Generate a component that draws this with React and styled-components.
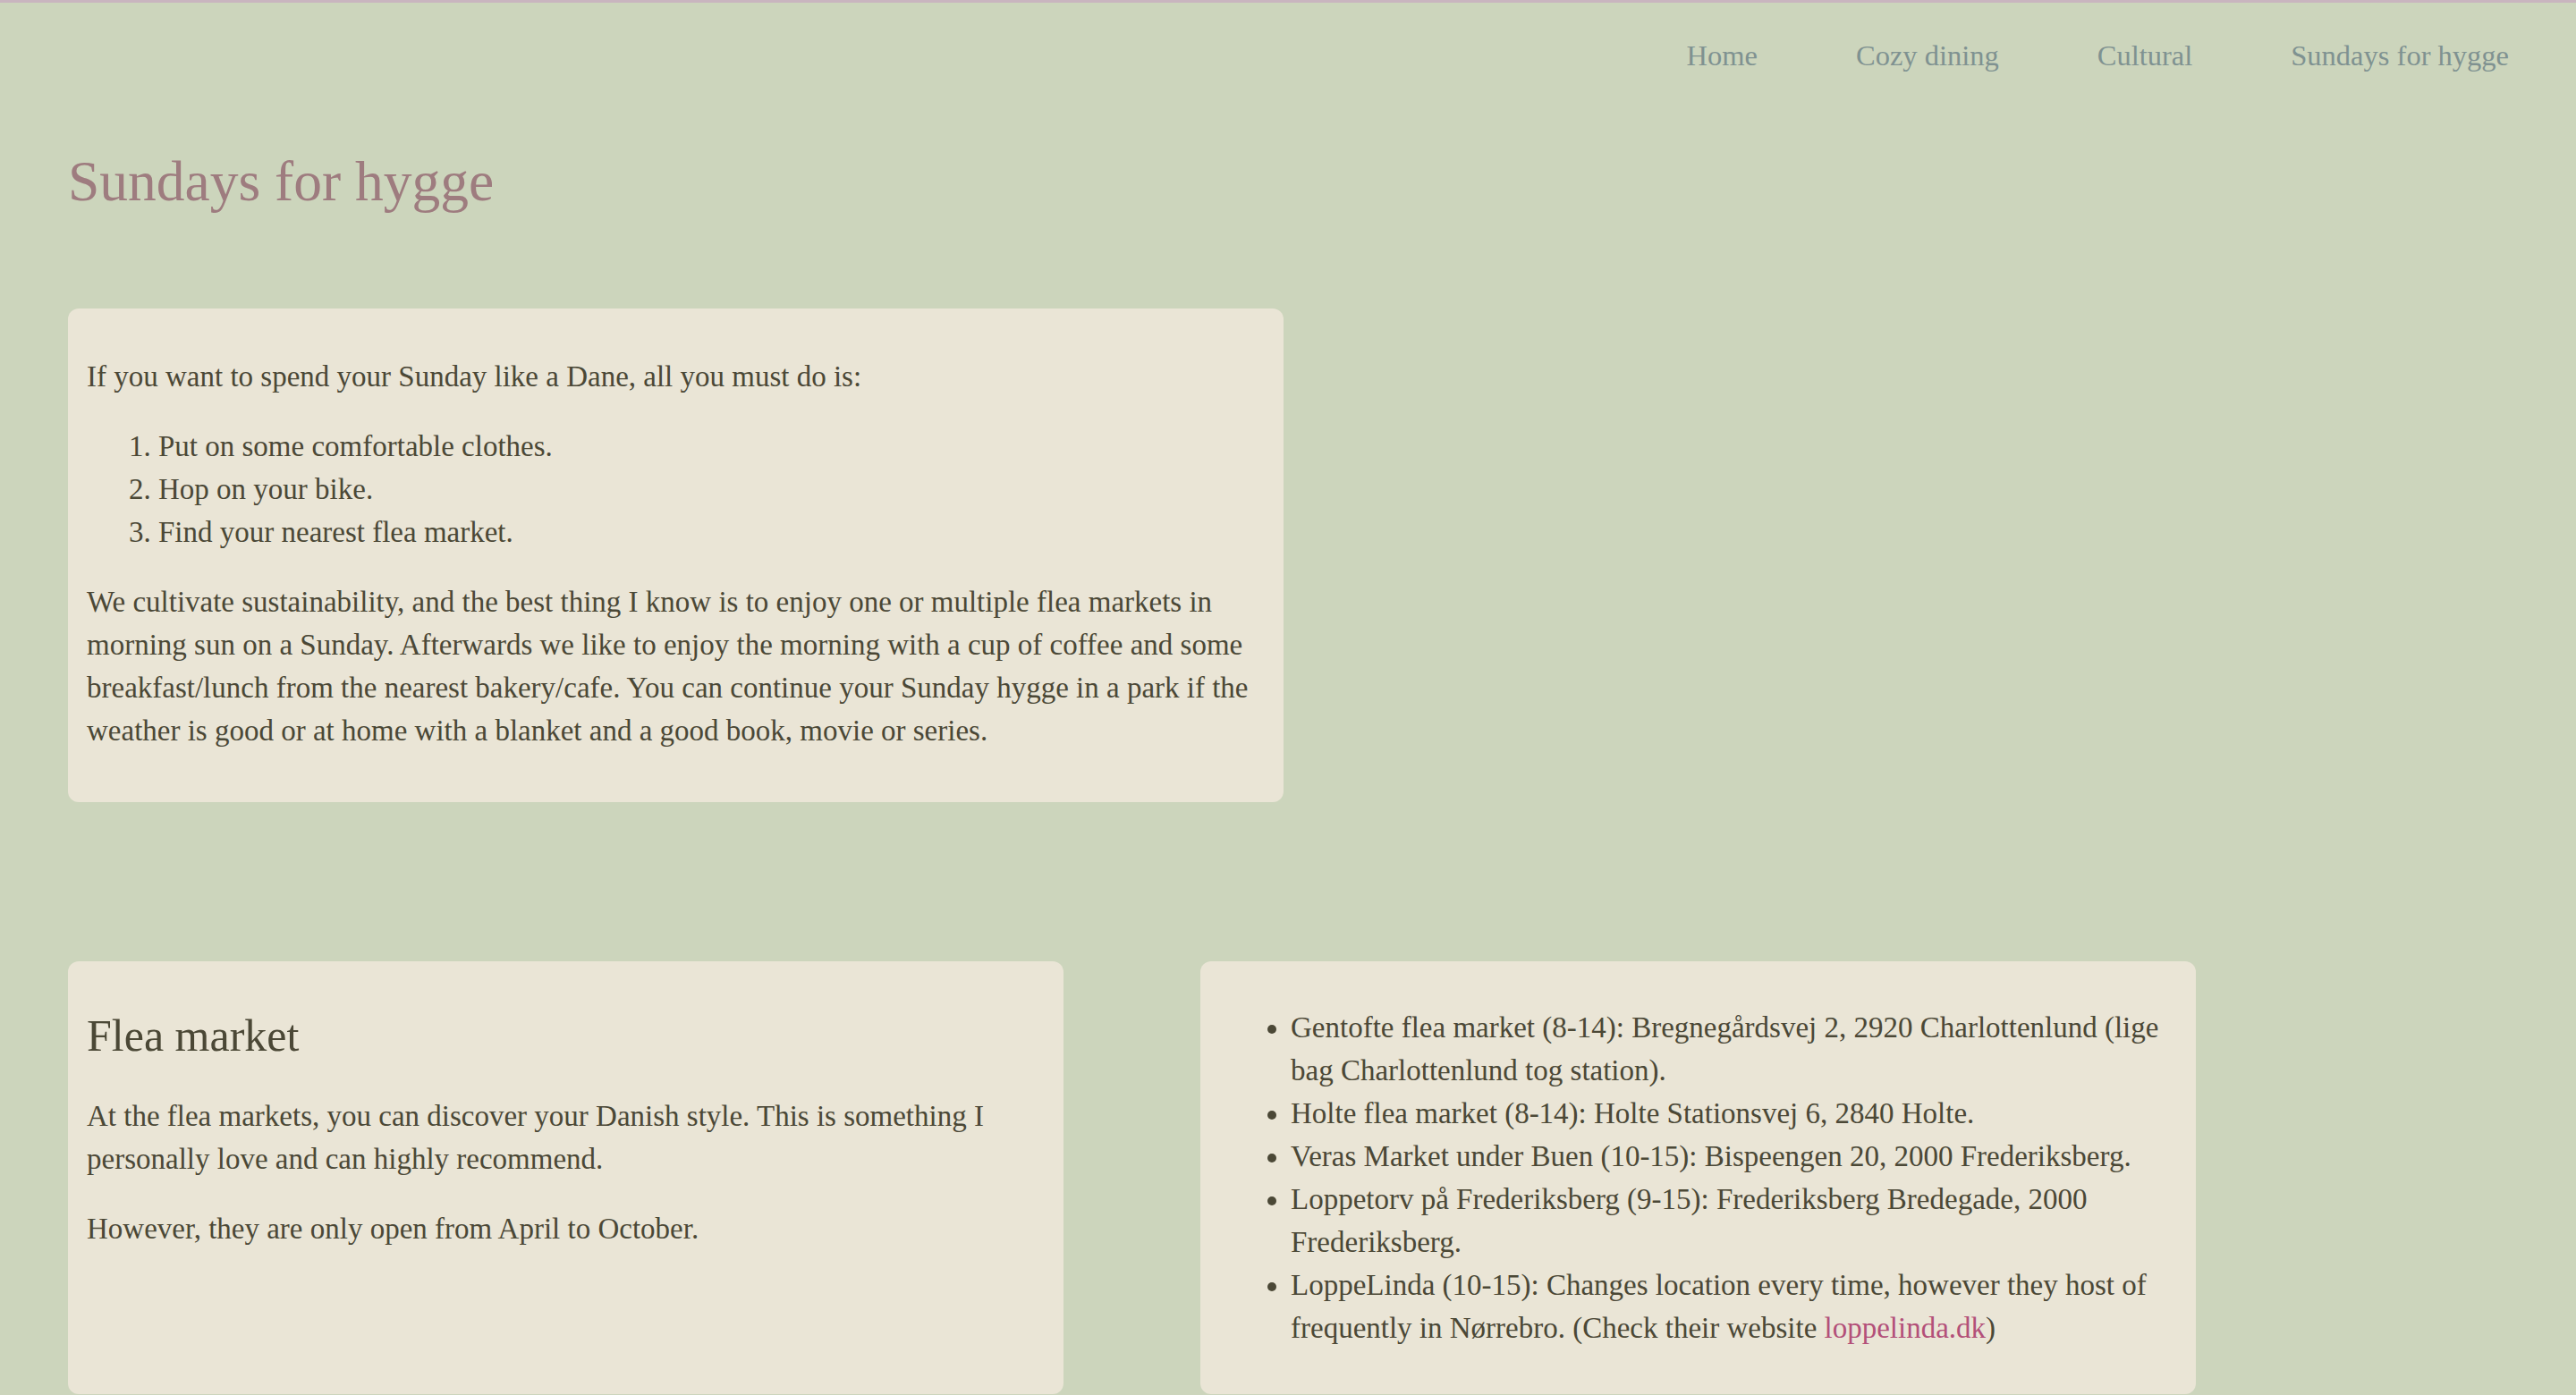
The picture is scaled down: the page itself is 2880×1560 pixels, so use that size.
import React from 'react';
import styled, { createGlobalStyle } from 'styled-components';

const GlobalStyle = createGlobalStyle`
body {
    margin: 0;
    background-color: #ccd5bc;
    font-family: "Liberation Serif", "DejaVu Serif", serif;
    color: #4b4836;
}
`

const Pagina = styled.div`
border-top: 3px solid #c9b5bf;
padding: 0 75px 0 76px;
`

const Menu = styled.nav`
display: flex;
justify-content: flex-end;
gap: 110px;
padding-top: 37px;
`

const MenuLink = styled.a`
font-size: 32.5px;
line-height: 44px;
color: #7f9291;
text-decoration: none;
`

const Titulo = styled.h1`
font-size: 63.5px;
font-weight: normal;
color: #9e7c7f;
margin: 83px 0 0;
line-height: 72px;
`

const Cartao = styled.section`
background-color: #eae5d6;
border-radius: 12px;
padding: 20px 20px 20px 21px;
font-size: 33px;
line-height: 48px;
`

const Intro = styled(Cartao)`
width: 1359px;
box-sizing: border-box;
margin-top: 106px;
padding-top: 22px;
padding-bottom: 26px;
`

const Grade = styled.div`
display: grid;
grid-template-columns: 1113px 1113px;
column-gap: 153px;
margin-top: 178px;
`

const Paragrafo = styled.p`
margin: 30px 0;
`

const Lista = styled.ol`
margin: 30px 0;
padding-left: 80px;
`

const Marcadores = styled.ul`
margin: 30px 0;
padding-left: 80px;
`

const Subtitulo = styled.h2`
font-size: 50px;
font-weight: normal;
line-height: normal;
margin: 34px 0 37px;
`

const LinkSite = styled.a`
color: #b35079;
text-decoration: none;
`

const mercados = [
    'Gentofte flea market (8-14): Bregnegårdsvej 2, 2920 Charlottenlund (lige bag Charlottenlund tog station).',
    'Holte flea market (8-14): Holte Stationsvej 6, 2840 Holte.',
    'Veras Market under Buen (10-15): Bispeengen 20, 2000 Frederiksberg.',
    'Loppetorv på Frederiksberg (9-15): Frederiksberg Bredegade, 2000 Frederiksberg.',
]

export default function App() {
    return <Pagina>
        <GlobalStyle />
        <Menu>
            <MenuLink href="#">Home</MenuLink>
            <MenuLink href="#">Cozy dining</MenuLink>
            <MenuLink href="#">Cultural</MenuLink>
            <MenuLink href="#">Sundays for hygge</MenuLink>
        </Menu>
        <Titulo>Sundays for hygge</Titulo>
        <Intro>
            <Paragrafo>If you want to spend your Sunday like a Dane, all you must do is:</Paragrafo>
            <Lista>
                <li>Put on some comfortable clothes.</li>
                <li>Hop on your bike.</li>
                <li>Find your nearest flea market.</li>
            </Lista>
            <Paragrafo>
                We cultivate sustainability, and the best thing I know is to enjoy one or multiple flea markets in
                morning sun on a Sunday. Afterwards we like to enjoy the morning with a cup of coffee and some
                breakfast/lunch from the nearest bakery/cafe. You can continue your Sunday hygge in a park if the
                weather is good or at home with a blanket and a good book, movie or series.
            </Paragrafo>
        </Intro>
        <Grade>
            <Cartao>
                <Subtitulo>Flea market</Subtitulo>
                <Paragrafo>
                    At the flea markets, you can discover your Danish style. This is something I personally love and can highly recommend.
                </Paragrafo>
                <Paragrafo>However, they are only open from April to October.</Paragrafo>
            </Cartao>
            <Cartao>
                <Marcadores>
                    {mercados.map((m) => <li key={m}>{m}</li>)}
                    <li>
                        LoppeLinda (10-15): Changes location every time, however they host of frequently in Nørrebro. (Check their website <LinkSite href="#">loppelinda.dk</LinkSite>)
                    </li>
                </Marcadores>
            </Cartao>
        </Grade>
    </Pagina>
}
